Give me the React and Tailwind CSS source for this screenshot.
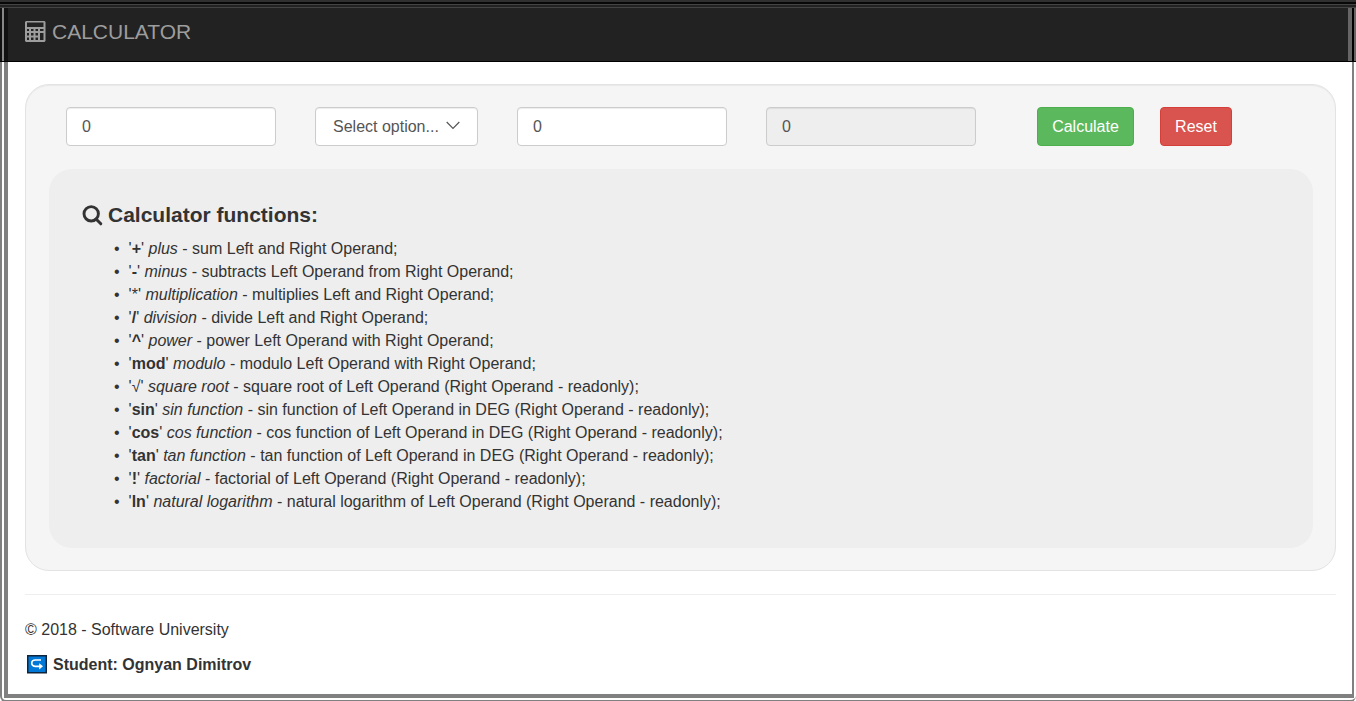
import React, { useState } from "react";

const FUNCTIONS = [
  { sign: "+", name: "plus", text: "sum Left and Right Operand;" },
  { sign: "-", name: "minus", text: "subtracts Left Operand from Right Operand;" },
  { sign: "*", name: "multiplication", text: "multiplies Left and Right Operand;", light: true },
  { sign: "/", name: "division", text: "divide Left and Right Operand;" },
  { sign: "^", name: "power", text: "power Left Operand with Right Operand;" },
  { sign: "mod", name: "modulo", text: "modulo Left Operand with Right Operand;" },
  { sign: "√", name: "square root", text: "square root of Left Operand (Right Operand - readonly);", light: true },
  { sign: "sin", name: "sin function", text: "sin function of Left Operand in DEG (Right Operand - readonly);" },
  { sign: "cos", name: "cos function", text: "cos function of Left Operand in DEG (Right Operand - readonly);" },
  { sign: "tan", name: "tan function", text: "tan function of Left Operand in DEG (Right Operand - readonly);" },
  { sign: "!", name: "factorial", text: "factorial of Left Operand (Right Operand - readonly);" },
  { sign: "ln", name: "natural logarithm", text: "natural logarithm of Left Operand (Right Operand - readonly);" },
];

const FIELD =
  "h-[39px] rounded border border-[#ccc] text-base text-[#555] shadow-[inset_0_1px_1px_rgba(0,0,0,0.075)] outline-none focus:border-[#66afe9]";

function CalculatorIcon() {
  return (
    <svg width="21" height="21" viewBox="0 0 21 21" aria-hidden="true">
      <path
        fill="#9d9d9d"
        fillRule="evenodd"
        d="M1 0H19.5L20.5 1V20L19.5 21H1L0 20V1ZM2 1.5V6H18.5V1.5ZM2 8V10H4V8ZM6 8V10H8.5V8ZM10.5 8V10H13V8ZM15 8V10H18.5V8ZM2 12V14.5H4V12ZM6 12V14.5H8.5V12ZM10.5 12V14.5H13V12ZM15 12V19H18.5V12ZM2 16.5V19H4V16.5ZM6 16.5V19H8.5V16.5ZM10.5 16.5V19H13V16.5Z"
      />
    </svg>
  );
}

function SearchIcon() {
  return (
    <svg width="21" height="21" viewBox="0 0 21 21" fill="none" stroke="#333" aria-hidden="true">
      <circle cx="9.2" cy="8.8" r="7.2" strokeWidth="2.9" />
      <path d="M14 14L18.8 18.8" strokeWidth="3" strokeLinecap="round" />
    </svg>
  );
}

function ReturnIcon() {
  return (
    <svg width="20" height="19" viewBox="0 0 20 19" fill="none" aria-hidden="true">
      <rect x="0.75" y="0.75" width="18.5" height="17" fill="#0078d7" stroke="#10243c" strokeWidth="1.5" />
      <path d="M14 5H8.5C3.5 5 3.5 11.3 8.5 11.3H13.5" stroke="#fff" strokeWidth="1.7" />
      <path d="M12.2 8.2L16 11.3L12.2 14.4Z" fill="#fff" />
    </svg>
  );
}

function Header() {
  return (
    <header className="border-b border-black bg-[#222]">
      <div className="h-[2px] bg-[#303030]" />
      <div className="h-[2px] bg-[#080808]" />
      <div className="h-px bg-[#444]" />
      <div className="h-[2px] bg-[#222]" />
      <div className="h-px bg-[#444]" />
      <div className="flex h-[53px]">
        <div className="w-[2px] bg-[#111]" />
        <div className="w-[2px] bg-[#888]" />
        <div className="w-1 bg-[#111]" />
        <div className="flex flex-1 items-start pl-[17px] pt-[11px]">
          <a href="#" className="flex items-start gap-[6px] text-[21px] leading-[25px] text-[#9d9d9d]">
            <span className="pt-[2px]">
              <CalculatorIcon />
            </span>
            CALCULATOR
          </a>
        </div>
        <div className="w-1 bg-[#666]" />
        <div className="w-[2px] bg-black" />
        <div className="w-[2px] bg-[#666]" />
      </div>
    </header>
  );
}

function CalculatorForm() {
  const [left, setLeft] = useState("0");
  const [right, setRight] = useState("0");
  const [op, setOp] = useState("");
  const [result, setResult] = useState("0");

  const calculate = (e) => {
    e.preventDefault();
    const a = Number(left);
    const b = Number(right);
    const rad = (a * Math.PI) / 180;
    const fact = (n) => (n <= 1 ? 1 : n * fact(n - 1));
    const ops = {
      "+": () => a + b,
      "-": () => a - b,
      "*": () => a * b,
      "/": () => a / b,
      "^": () => a ** b,
      mod: () => a % b,
      "√": () => Math.sqrt(a),
      sin: () => Math.sin(rad),
      cos: () => Math.cos(rad),
      tan: () => Math.tan(rad),
      "!": () => fact(Math.min(a, 170)),
      ln: () => Math.log(a),
    };
    if (ops[op]) setResult(String(ops[op]()));
  };

  const reset = () => {
    setLeft("0");
    setRight("0");
    setOp("");
    setResult("0");
  };

  return (
    <form onSubmit={calculate} className="flex flex-wrap items-center pl-[17px]">
      <div className="flex flex-wrap items-center gap-[39px]">
        <input aria-label="Left operand" value={left} onChange={(e) => setLeft(e.target.value)} className={`${FIELD} w-[210px] bg-white px-[15px]`} />
        <div className="relative">
          <select aria-label="Operation" value={op} onChange={(e) => setOp(e.target.value)} className={`${FIELD} w-[163px] appearance-none bg-white pl-[17px] pr-8`}>
            <option value="">Select option...</option>
            {FUNCTIONS.map((f) => (
              <option key={f.sign} value={f.sign}>{f.sign}</option>
            ))}
          </select>
          <svg className="pointer-events-none absolute right-[18px] top-[14px]" width="14" height="9" viewBox="0 0 14 9" fill="none" stroke="#555" strokeWidth="1.2" aria-hidden="true">
            <path d="M0.7 1L7 7.3L13.3 1" />
          </svg>
        </div>
        <input aria-label="Right operand" value={right} onChange={(e) => setRight(e.target.value)} className={`${FIELD} w-[210px] bg-white px-[15px]`} />
        <input aria-label="Result" readOnly value={result} className={`${FIELD} w-[210px] bg-[#eee] px-[15px]`} />
      </div>
      <div className="ml-[61px] flex gap-[26px]">
        <button type="submit" className="h-[39px] w-[97px] rounded border border-[#4cae4c] bg-[#5cb85c] text-white">Calculate</button>
        <button type="button" onClick={reset} className="h-[39px] w-[72px] rounded border border-[#d43f3a] bg-[#d9534f] text-white">Reset</button>
      </div>
    </form>
  );
}

function FunctionList() {
  return (
    <section className="mt-[23px] rounded-[23px] bg-[#eee] px-[33px] pb-[35px] pt-[34px]">
      <h2 className="flex items-center gap-[5px] text-[21px] font-bold leading-[24px]">
        <SearchIcon />
        Calculator functions:
      </h2>
      <ul className="mt-[10px] pl-[32px]">
        {FUNCTIONS.map((f) => (
          <li key={f.sign} className="flex gap-[9px] leading-[23px]">
            <span aria-hidden="true">•</span>
            <span>
              '<span className={f.light ? "font-normal" : "font-bold"}>{f.sign}</span>' <em>{f.name}</em> - {f.text}
            </span>
          </li>
        ))}
      </ul>
    </section>
  );
}

export default function App() {
  return (
    <div className="flex min-h-screen flex-col bg-white font-['Liberation_Sans',Arial,sans-serif] text-base text-[#333]">
      <Header />
      <div className="flex flex-1 rounded-b-md border-b-2 border-l-2 border-[#808080] pb-[2px] pl-[2px] pr-[2px]">
        <div className="flex-1 border-b-4 border-l-4 border-r-2 border-[#808080] pb-[18px] pl-[17px] pr-4 pt-[22px]">
          <main className="rounded-[24px] border border-[#e3e3e3] bg-[#f5f5f5] pb-[22px] pl-[23px] pr-[22px] pt-[22px] shadow-[inset_0_1px_1px_rgba(0,0,0,0.05)]">
            <CalculatorForm />
            <FunctionList />
          </main>
          <hr className="mt-[23px] border-[#eee]" />
          <footer className="mt-[23px] flex flex-col gap-3 leading-[23px]">
            <p>© 2018 - Software University</p>
            <p className="flex items-center gap-[6px] pl-[2px] font-bold">
              <ReturnIcon />
              Student: Ognyan Dimitrov
            </p>
          </footer>
        </div>
      </div>
    </div>
  );
}
